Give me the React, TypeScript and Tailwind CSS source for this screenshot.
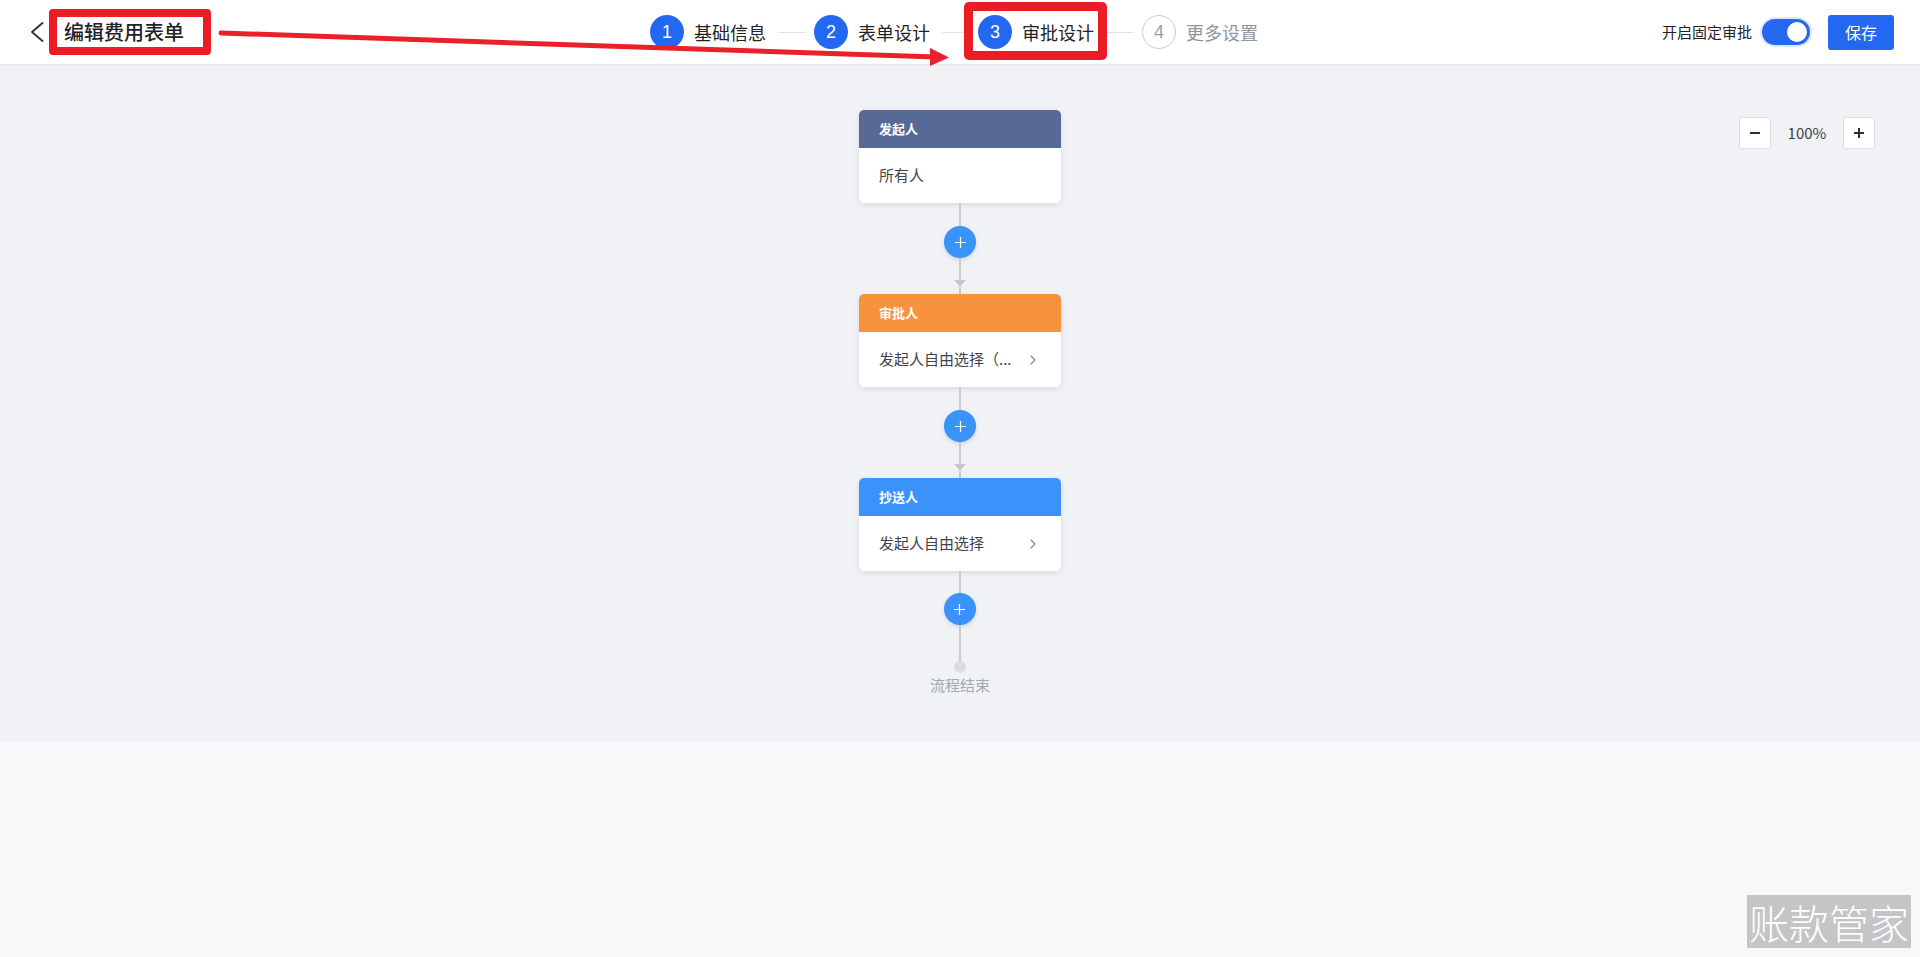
import React from 'react';

type StepState = 'done' | 'current' | 'todo';

const steps: { no: number; label: string; state: StepState }[] = [
  { no: 1, label: '基础信息', state: 'done' },
  { no: 2, label: '表单设计', state: 'done' },
  { no: 3, label: '审批设计', state: 'current' },
  { no: 4, label: '更多设置', state: 'todo' },
];

const nodes = [
  { title: '发起人', head: 'bg-[#576a95]', text: '所有人', chevron: false },
  { title: '审批人', head: 'bg-[#f7923e]', text: '发起人自由选择（...', chevron: true },
  { title: '抄送人', head: 'bg-[#3a93fb]', text: '发起人自由选择', chevron: true },
];

const Chevron = () => (
  <svg width="6" height="10" viewBox="0 0 6 10" fill="none">
    <path d="M1 1l4 4-4 4" stroke="#8c9099" strokeWidth="1.3" strokeLinecap="round" strokeLinejoin="round" />
  </svg>
);

const AddButton = () => (
  <button className="w-8 h-8 rounded-full bg-[#3a93fb] shadow-[0_2px_4px_rgba(0,0,0,0.12)] flex items-center justify-center">
    <svg width="11" height="11" viewBox="0 0 11 11">
      <path d="M5.5 0v11M0 5.5h11" stroke="#fff" strokeWidth="1.2" />
    </svg>
  </button>
);

const Line = ({ h }: { h: string }) => <div className={`w-[2px] bg-[#cacaca] ${h}`} />;

const FlowNode = ({ title, head, text, chevron }: (typeof nodes)[number]) => (
  <div className="w-[202px] rounded-[5px] bg-white shadow-[0_2px_6px_rgba(0,0,0,0.1)] overflow-hidden">
    <div className={`h-[38px] ${head} flex items-center px-5 text-[13px] font-bold text-white`}>{title}</div>
    <div className="h-[55px] flex items-center pl-5 pr-[25px] text-[15px] text-[#3f434b]">
      <span className="flex-1 whitespace-nowrap">{text}</span>
      {chevron && (
        <span className="ml-[10px] flex">
          <Chevron />
        </span>
      )}
    </div>
  </div>
);

const Link = () => (
  <div className="flex flex-col items-center">
    <Line h="h-[23px]" />
    <AddButton />
    <Line h="h-[22px]" />
    <div className="w-0 h-0 border-x-[6px] border-x-transparent border-t-[7px] border-t-[#c6c6c6]" />
    <Line h="h-[7px]" />
  </div>
);

export default function App() {
  return (
    <div className="relative h-[957px] bg-[#f7f8fa] font-['Noto_Sans_CJK_SC',sans-serif] overflow-hidden">
      {/* top bar */}
      <header className="h-[65px] bg-white border-b border-[#e6e8eb] grid grid-cols-[1fr_620px_1fr] items-center">
        <div className="flex items-center pl-[30px]">
          <svg width="14" height="20" viewBox="0 0 14 20" fill="none">
            <path d="M12.5 1L2 10l10.5 9" stroke="#2b2f36" strokeWidth="1.8" strokeLinecap="round" strokeLinejoin="round" />
          </svg>
          <div className="ml-[5px] h-[46px] border-[8px] border-[#ec1c24] rounded-[4px] bg-white flex items-center pl-[7px] pr-[19px]">
            <span className="text-[20px] leading-none text-[#1f2329] font-medium">编辑费用表单</span>
          </div>
        </div>

        <div className="flex items-center">
          {steps.map((s, i) => (
            <React.Fragment key={s.no}>
              <div className="relative flex items-center">
                {s.state === 'current' && (
                  <div className="absolute -left-[14px] -right-[13px] -top-[13px] -bottom-[11px] border-[9px] border-[#ec1c24] rounded-[5px]" />
                )}
                <div
                  className={
                    s.state === 'todo'
                      ? 'w-[34px] h-[34px] rounded-full border border-[#c9cdd4] flex items-center justify-center text-[18px] text-[#9aa0a9] font-["Liberation_Sans",sans-serif]'
                      : 'w-[34px] h-[34px] rounded-full bg-[#2468f2] flex items-center justify-center text-[18px] text-white font-["Liberation_Sans",sans-serif]'
                  }
                >
                  {s.no}
                </div>
                <span
                  className={
                    s.state === 'todo'
                      ? 'ml-[10px] text-[18px] leading-none text-[#8f959e]'
                      : 'ml-[10px] text-[18px] leading-none text-[#1f2329]'
                  }
                >
                  {s.label}
                </span>
              </div>
              {i < steps.length - 1 && <div className="ml-3 mr-2 w-[28px] h-px bg-[#e1e4ea]" />}
            </React.Fragment>
          ))}
        </div>

        <div className="flex items-center justify-end pr-[26px]">
          <span className="text-[15px] text-[#1f2329]">开启固定审批</span>
          <div className="ml-[10px] w-[48px] h-[26px] rounded-full bg-[#2468f2] ring-2 ring-[#dde8fd] flex items-center justify-end pr-[3px]">
            <div className="w-5 h-5 rounded-full bg-white" />
          </div>
          <button className="ml-[18px] w-[66px] h-[35px] rounded-[3px] bg-[#2468f2] text-white text-[16px]">保存</button>
        </div>
      </header>

      {/* process canvas */}
      <main className="relative h-[676px] bg-[#f0f2f5] flex flex-col items-center pt-[45px]">
        <FlowNode {...nodes[0]} />
        <Link />
        <FlowNode {...nodes[1]} />
        <Link />
        <FlowNode {...nodes[2]} />
        <div className="flex flex-col items-center">
          <Line h="h-[22px]" />
          <AddButton />
          <Line h="h-[36px]" />
          <div className="w-3 h-3 rounded-full bg-[#d9dce2]" />
          <span className="mt-[2px] text-[15px] leading-5 text-[#a3a8b5]">流程结束</span>
        </div>

        <div className="absolute top-[52px] right-[45px] flex items-center">
          <button className="w-8 h-8 rounded-[3px] border border-[#dcdfe6] bg-white flex items-center justify-center">
            <span className="w-[10px] h-[2px] bg-[#2b2f36]" />
          </button>
          <span className="mx-4 w-10 text-center text-[15px] text-[#3b3f47]">100%</span>
          <button className="w-8 h-8 rounded-[3px] border border-[#dcdfe6] bg-white flex items-center justify-center">
            <svg width="10" height="10" viewBox="0 0 10 10">
              <path d="M5 0v10M0 5h10" stroke="#2b2f36" strokeWidth="2" />
            </svg>
          </button>
        </div>
      </main>

      {/* callout arrow from the title to the current step */}
      <svg className="absolute left-0 top-0 w-[960px] h-[70px] pointer-events-none" viewBox="0 0 960 70">
        <path d="M221 33L936 57" stroke="#e8212b" strokeWidth="5" strokeLinecap="round" />
        <polygon points="949,57.5 930,48 930,66" fill="#e8212b" />
      </svg>

      <div className="absolute right-[9px] bottom-[9px] w-[164px] h-[53px] bg-[#c5c5c7] flex items-center justify-center text-[40px] leading-none font-light text-white">
        账款管家
      </div>
    </div>
  );
}
